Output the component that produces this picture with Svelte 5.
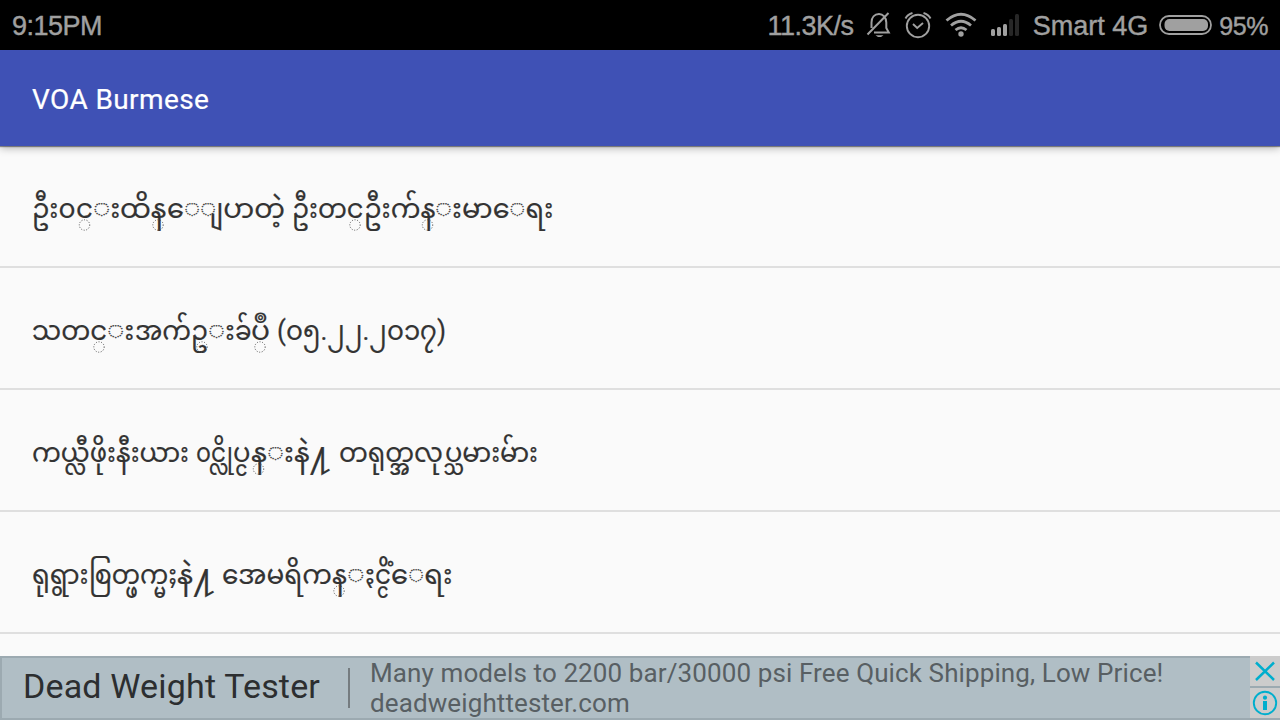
<script>
  // Each headline is a run of glyph groups: text, advance in px,
  // optional gap before it, optional offset of the dotted mark below it.
  const rows = [
    [
      { t: 'ဦး၀', w: 43.5 }, { t: 'င', w: 17, mark: 8.5 }, { t: 'း', w: 27.5 }, { t: 'ထိန', w: 46.5, mark: 38 },
      { t: 'ေျပာတဲ့', w: 118 },
      { t: 'ဦးတင', w: 71.5, gap: 7.5, mark: 63 }, { t: 'ဦးက်န', w: 71.5, mark: 63.5 }, { t: 'း', w: 27 }, { t: 'မာေရး', w: 91.5 },
    ],
    [
      { t: 'သတင', w: 75, mark: 67 }, { t: 'း', w: 27.5 }, { t: 'အက်ဥ', w: 73, mark: 67 }, { t: 'း', w: 27 },
      { t: 'ခ်', w: 16.5 }, { t: 'ပဳ', w: 19, mark: 9 }, { t: '(၀၅.၂၂.၂၀၁၇)', w: 169, gap: 6.5 },
    ],
    [
      { t: 'ကယ္လီဖိုးနီးယား', w: 157 }, { t: '၀င္လို', w: 37, gap: 7 }, { t: 'ပ္င', w: 17.5 }, { t: 'န', w: 16, mark: 7.5 },
      { t: 'း', w: 27 }, { t: 'နဲ႔', w: 36 }, { t: 'တရုတ္အလုပ္သမားမ်ား', w: 199, gap: 9 },
    ],
    [
      { t: 'ရုရွား', w: 56.5 }, { t: 'စြတ္ဖက္မႈ', w: 88 }, { t: 'နဲ႔', w: 37 },
      { t: 'အေမရိကန', w: 125, gap: 8.5, mark: 117 }, { t: 'ႏ', w: 28 }, { t: 'င္ငိံ', w: 16 }, { t: 'ေရး', w: 61.5 },
    ],
  ];
</script>

<div class="screen">
  <header class="status">
    <span class="time">9:15PM</span>
    <span class="speed">11.3K/s</span>
    <svg class="bell" width="26" height="28" viewBox="0 0 26 28" fill="none" stroke="#a0a0a0" stroke-width="2">
      <path d="M5.500 17V11.500C5.500 6.500 8.500 3 13 3C17 3 20.300 6.500 20.300 11.500V17L22.800 21.500H8M1.500 23.500L22.500 2" />
      <path d="M9.500 24.300H17.500L15 26H12Z" fill="#a0a0a0" stroke="none" />
    </svg>
    <svg class="alarm" width="28" height="28" viewBox="0 0 28 28" fill="none" stroke="#a0a0a0" stroke-width="1.9">
      <circle cx="14" cy="15" r="11.200" />
      <path d="M9 13L13.200 17L19 12M1.500 7.500Q3.500 3.500 8.500 2M19.500 2Q24.500 3.500 26.500 7.500" />
    </svg>
    <svg class="wifi" width="32" height="26" viewBox="0 0 32 26" fill="none" stroke="#a0a0a0" stroke-width="2.8">
      <path d="M1.500 8.500Q16 -4 30.500 8.500M6 13.500Q16 5 26 13.500M10.500 18Q16 13.500 21.500 18" />
      <circle cx="16" cy="22" r="2.700" fill="#a0a0a0" stroke="none" />
    </svg>
    <svg class="signal" width="28" height="24" viewBox="0 0 28 24" fill="#a0a0a0">
      <rect x="0" y="16" width="4" height="7" rx="1.500" />
      <rect x="6" y="14" width="4" height="9" rx="1.500" />
      <rect x="12" y="11" width="4" height="12" rx="1.500" />
      <rect x="18" y="6" width="4" height="17" rx="1.500" fill="#272727" />
      <rect x="24" y="1" width="4" height="22" rx="1.500" fill="#272727" />
    </svg>
    <span class="carrier">Smart 4G</span>
    <svg class="battery" width="53" height="20" viewBox="0 0 53 20">
      <rect x="1" y="1" width="51" height="18" rx="9" fill="none" stroke="#a0a0a0" stroke-width="1.800" />
      <rect x="5.500" y="4" width="43.500" height="12" rx="5" fill="#a0a0a0" />
    </svg>
    <span class="percent">95%</span>
  </header>

  <div class="appbar"><h1>VOA Burmese</h1></div>

  <main>
    {#each rows as row}
      <div class="row">
        {#each row as g}
          <svg class="group" width={g.w} height="60" style:margin-left="{g.gap ?? 0}px">
            <text x="0" y="36" textLength={g.w} lengthAdjust="spacingAndGlyphs">{g.t}</text>
            {#if g.mark}<circle class="mark" cx={g.mark} cy="43" r="5.200" />{/if}
          </svg>
        {/each}
      </div>
    {/each}
  </main>

  <footer class="ad">
    <div class="headline">Dead Weight Tester</div>
    <div class="rule"></div>
    <div class="copy">Many models to 2200 bar/30000 psi Free Quick Shipping, Low Price!<br />deadweighttester.com</div>
    <div class="controls">
      <div class="control">
        <svg width="30" height="30" viewBox="0 0 30 30" fill="none" stroke="#00aecd" stroke-width="2.500"><path d="M6 6.500L24 24M24 6.500L6 24" /></svg>
      </div>
      <div class="control">
        <svg width="30" height="30" viewBox="0 0 30 30" fill="none" stroke="#00aecd" stroke-width="1.900"><circle cx="15" cy="15" r="11.200" /><path d="M15 13V22" stroke-width="4" /><circle cx="15" cy="9.700" r="2.100" fill="#00aecd" stroke="none" /></svg>
      </div>
    </div>
  </footer>
</div>

<style>
  :global(body) { margin: 0; overflow: hidden; }
  .screen { width: 1280px; height: 720px; overflow: hidden; display: flex; flex-direction: column; background: #fafafa; font-family: Roboto, sans-serif; }
  .status { box-sizing: border-box; height: 50px; flex: none; display: flex; align-items: center; padding: 3px 12px 0; background: #000; color: #a0a0a0; font: 27px/47px "Liberation Sans", sans-serif; -webkit-text-stroke: 0.4px #a0a0a0; }
  .status svg { flex: none; margin-top: -3px; }
  .time { flex: 1; letter-spacing: -0.5px; }
  .speed { letter-spacing: -0.5px; }
  .bell { margin-left: 12px; }
  .alarm { margin-left: 12px; }
  .wifi { margin-left: 13px; }
  .signal { margin-left: 14px; }
  .carrier { margin-left: 14px; }
  .battery { margin-left: 11px; }
  .percent { margin-left: 7px; font-size: 25px; letter-spacing: -0.4px; }
  .appbar { box-sizing: border-box; height: 96px; flex: none; display: flex; align-items: center; padding: 2px 32px 0; background: #3f51b5; box-shadow: 0 1px 1px rgba(0,0,0,.4), 0 2px 8px rgba(0,0,0,.3); position: relative; }
  h1 { margin: 0; color: #fff; font-size: 28px; font-weight: 400; letter-spacing: .4px; -webkit-text-stroke: 0.2px #fff; }
  main { flex: 1; min-height: 0; overflow: hidden; }
  .row { box-sizing: border-box; height: 122px; display: flex; align-items: center; padding: 12px 32px 0; border-bottom: 2px solid #dfdfdf; }
  .group { flex: none; overflow: visible; fill: #333; font: 27px Roboto, "Noto Sans Myanmar", "Noto Sans", sans-serif; }
  .group text { stroke: #333; stroke-width: .2px; }
  .mark { fill: none; stroke: #555; stroke-width: 1px; stroke-dasharray: 1 1.600; }
  .ad { box-sizing: border-box; height: 64px; flex: none; display: flex; align-items: center; border: 2px solid #9caab1; border-right: 0; background: #b0bec5; padding-left: 21px; }
  .headline { width: 325px; padding-bottom: 5px; color: #2c2e30; font-size: 34px; letter-spacing: .17px; white-space: nowrap; }
  .rule { width: 2px; height: 40px; background: #757c80; }
  .copy { flex: 1; margin-left: 20px; color: #585f63; font-size: 26px; line-height: 30px; letter-spacing: .11px; white-space: nowrap; }
  .controls { align-self: flex-start; display: flex; flex-direction: column; gap: 2px; margin-top: -2px; background: #9caab1; }
  .control { width: 30px; height: 30px; background: #ccc; }
  .control svg { display: block; }
</style>
